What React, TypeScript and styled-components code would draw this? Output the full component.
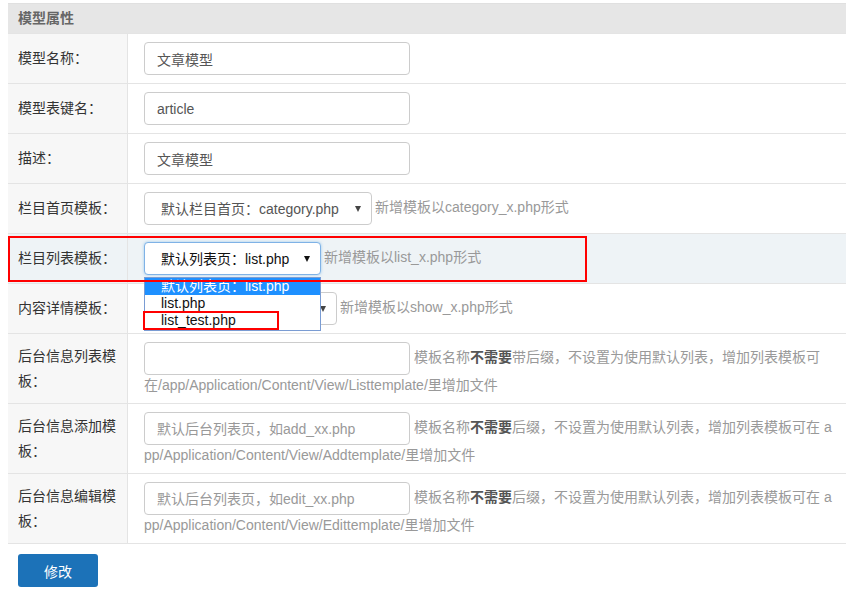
import React from "react";
import styled, { createGlobalStyle } from "styled-components";

const GlobalStyle = createGlobalStyle`
  html, body {
    margin: 0;
    padding: 0;
    background: #fff;
  }
  body {
    padding: 3px 6px 0 8px;
    font-family: "Liberation Sans", "Noto Sans CJK SC", Arial, sans-serif;
    font-size: 14px;
    color: #333;
  }
`;

const Page = styled.div`
  width: 838px;
`;

const Panel = styled.div`
  border-top: 1px solid #e0e0e0;
`;

const PanelTitle = styled.div`
  height: 29px;
  line-height: 29px;
  padding-left: 10px;
  background: #e6e6e6;
  color: #666;
  font-weight: bold;
  font-size: 14px;
`;

const Row = styled.div<{ $active?: boolean }>`
  position: relative;
  display: grid;
  grid-template-columns: 120px 1fr;
  border-top: 1px solid #e4e4e4;
  background: ${(p) => (p.$active ? "#eef3f6" : "transparent")};
`;

const Label = styled.div<{ $active?: boolean }>`
  display: flex;
  align-items: center;
  padding: 0 10px;
  line-height: 25px;
  background: ${(p) => (p.$active ? "#eef3f6" : "#f7f7f7")};
  border-right: 1px solid #e4e4e4;
  color: #333;
`;

const Value = styled.div`
  padding: 8px 14px 8px 16px;
  line-height: 20px;
  word-break: break-all;
`;

const Input = styled.input`
  box-sizing: border-box;
  display: inline-block;
  vertical-align: middle;
  width: 266px;
  height: 33px;
  padding: 0 12px;
  border: 1px solid #ccc;
  border-radius: 4px;
  font: inherit;
  color: #555;
  background: #fff;
  outline: none;

  &::placeholder {
    color: #999;
  }
`;

const SelectWrap = styled.div`
  position: relative;
  display: inline-block;
  vertical-align: middle;
`;

const SelectBox = styled.div<{ $w: number; $focus?: boolean }>`
  box-sizing: border-box;
  display: flex;
  align-items: center;
  width: ${(p) => p.$w}px;
  height: 33px;
  padding: 0 10px 0 16px;
  border: 1px solid ${(p) => (p.$focus ? "#7fb2e6" : "#ccc")};
  border-radius: 4px;
  box-shadow: ${(p) => (p.$focus ? "0 0 3px rgba(102, 175, 233, 0.6)" : "none")};
  background: #fff;
  color: ${(p) => (p.$focus ? "#111" : "#555")};
  white-space: nowrap;
`;

const SelectText = styled.span`
  flex: 1;
  overflow: hidden;
`;

const Caret = styled.span<{ $dark?: boolean }>`
  width: 0;
  height: 0;
  border-left: 3.5px solid transparent;
  border-right: 3.5px solid transparent;
  border-top: 6px solid ${(p) => (p.$dark ? "#111" : "#444")};
`;

const DropList = styled.ul`
  position: absolute;
  z-index: 5;
  top: 35px;
  left: 0;
  box-sizing: border-box;
  width: 177px;
  margin: 0;
  padding: 0 0 1px;
  list-style: none;
  background: #fff;
  border: 1px solid #7a9cd3;
`;

const DropItem = styled.li<{ $selected?: boolean }>`
  position: relative;
  height: 17px;
  line-height: 17px;
  padding-left: 16px;
  color: ${(p) => (p.$selected ? "#fff" : "#111")};
  background: ${(p) => (p.$selected ? "#1e90ff" : "#fff")};
  white-space: nowrap;
`;

const Mark = styled.span`
  position: absolute;
  left: -2px;
  top: -1px;
  width: 136px;
  height: 19px;
  box-sizing: border-box;
  border: 2px solid #f00;
`;

const RowMark = styled.span`
  position: absolute;
  z-index: 6;
  left: 0;
  top: 2px;
  width: 579px;
  height: 46px;
  box-sizing: border-box;
  border: 2px solid #f00;
  pointer-events: none;
`;

const Help = styled.span<{ $gap?: number }>`
  margin-left: ${(p) => p.$gap ?? 4}px;
  color: #999;

  b {
    color: #555;
  }
`;

const Footer = styled.div`
  border-top: 1px solid #e4e4e4;
  padding: 10px 10px;
`;

const Button = styled.button`
  width: 80px;
  height: 33px;
  border: none;
  border-radius: 3px;
  background: #1c72b8;
  color: #fff;
  font: inherit;
  font-size: 14px;
`;

type Rule = { label: string; placeholder?: string; tail: string };

const backendRules: Rule[] = [
  {
    label: "后台信息列表模板：",
    tail: "带后缀，不设置为使用默认列表，增加列表模板可在/app/Application/Content/View/Listtemplate/里增加文件",
  },
  {
    label: "后台信息添加模板：",
    placeholder: "默认后台列表页，如add_xx.php",
    tail: "后缀，不设置为使用默认列表，增加列表模板可在 app/Application/Content/View/Addtemplate/里增加文件",
  },
  {
    label: "后台信息编辑模板：",
    placeholder: "默认后台列表页，如edit_xx.php",
    tail: "后缀，不设置为使用默认列表，增加列表模板可在 app/Application/Content/View/Edittemplate/里增加文件",
  },
];

export default function App() {
  return (
    <Page>
      <GlobalStyle />
      <Panel>
        <PanelTitle>模型属性</PanelTitle>

        <Row>
          <Label>模型名称：</Label>
          <Value>
            <Input defaultValue="文章模型" />
          </Value>
        </Row>
        <Row>
          <Label>模型表键名：</Label>
          <Value>
            <Input defaultValue="article" />
          </Value>
        </Row>
        <Row>
          <Label>描述：</Label>
          <Value>
            <Input defaultValue="文章模型" />
          </Value>
        </Row>

        <Row>
          <Label>栏目首页模板：</Label>
          <Value>
            <SelectWrap>
              <SelectBox $w={228}>
                <SelectText>默认栏目首页：category.php</SelectText>
                <Caret />
              </SelectBox>
            </SelectWrap>
            <Help $gap={3}>新增模板以category_x.php形式</Help>
          </Value>
        </Row>

        <Row $active>
          <Label $active>栏目列表模板：</Label>
          <Value>
            <SelectWrap>
              <SelectBox $w={177} $focus>
                <SelectText>默认列表页：list.php</SelectText>
                <Caret $dark />
              </SelectBox>
              <DropList>
                <DropItem $selected>默认列表页：list.php</DropItem>
                <DropItem>list.php</DropItem>
                <DropItem>
                  list_test.php
                  <Mark />
                </DropItem>
              </DropList>
            </SelectWrap>
            <Help $gap={3}>新增模板以list_x.php形式</Help>
          </Value>
          <RowMark />
        </Row>

        <Row>
          <Label>内容详情模板：</Label>
          <Value>
            <SelectWrap>
              <SelectBox $w={193}>
                <SelectText>默认内容页：show.php</SelectText>
                <Caret />
              </SelectBox>
            </SelectWrap>
            <Help $gap={3}>新增模板以show_x.php形式</Help>
          </Value>
        </Row>

        {backendRules.map((r) => (
          <Row key={r.label}>
            <Label>{r.label}</Label>
            <Value>
              <Input placeholder={r.placeholder} />
              <Help>
                模板名称<b>不需要</b>
                {r.tail}
              </Help>
            </Value>
          </Row>
        ))}

        <Footer>
          <Button>修改</Button>
        </Footer>
      </Panel>
    </Page>
  );
}
